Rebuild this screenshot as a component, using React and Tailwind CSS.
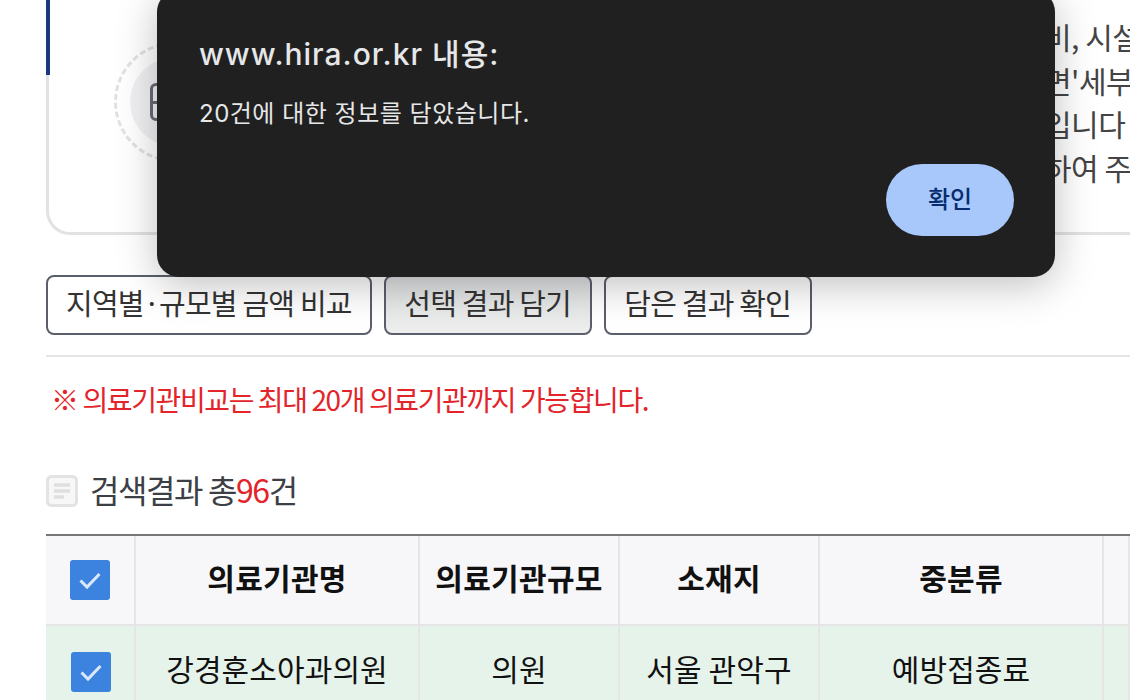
const FONT = "font-['Noto_Sans_CJK_KR','Noto_Sans',sans-serif]"

const COLUMNS = 'grid grid-cols-[90px_284px_200px_200px_284px_1fr]'
const HEADERS = ['의료기관명', '의료기관규모', '소재지', '중분류', '']
const ROW = ['강경훈소아과의원', '의원', '서울 관악구', '예방접종료', '']
const NOTICE = ['비, 시설', "면'세부", '입니다', '하여 주']

function CheckBox({ className = '' }) {
  return (
    <span className={`flex h-10 w-10 items-center justify-center rounded-[3px] bg-[#3b83de] ${className}`}>
      <svg width="24" height="24" viewBox="0 0 24 24" fill="none">
        <path d="M2.5 12.5 9 19 21.5 6" stroke="#dbe8fa" strokeWidth="3" />
      </svg>
    </span>
  )
}

function ActionButton({ active, children }) {
  return (
    <button
      className={`h-[60px] min-w-[208px] rounded-lg border-2 border-[#5b5f6b] px-[18px] text-[29px] tracking-[-0.8px] text-[#333] ${
        active ? 'bg-gradient-to-b from-[#dfe1e2] to-[#eeeeee]' : 'bg-white'
      }`}
    >
      <span className="relative top-[-2px]">{children}</span>
    </button>
  )
}

function AlertDialog() {
  return (
    <div className="absolute left-[157px] top-[-10px] flex h-[287px] w-[898px] flex-col rounded-[22px] bg-[#202020] pb-[41px] pl-[42px] pr-[41px] pt-[44px] shadow-[0_8px_40px_rgba(0,0,0,0.25)]">
      <h2 className="font-['Inter','Noto_Sans_CJK_KR',sans-serif] text-[30px] font-medium leading-[40px] tracking-[1px] text-[#e6e7e8]">
        www.hira.or.kr 내용:
      </h2>
      <p className="mt-[23px] font-['Inter','Noto_Sans_CJK_KR',sans-serif] text-[24px] leading-[34px] tracking-[0.5px] text-[#e6e7e8]">
        20건에 대한 정보를 담았습니다.
      </p>
      <button className="ml-auto mt-auto h-[72px] w-[128px] rounded-full bg-[#a8c7fa] text-[24px] font-medium text-[#062e6f]">
        <span className="relative top-[-2px]">확인</span>
      </button>
    </div>
  )
}

export default function App() {
  return (
    <div className={`relative h-[700px] w-[1130px] overflow-hidden bg-white ${FONT}`}>
      <div className="pl-[46px]">
        {/* 안내 박스 */}
        <div className="relative flex h-[235px] w-[1160px] rounded-b-[24px] border-x-[3px] border-b-[3px] border-[#e2e2e4]">
          <span className="absolute left-[-3px] top-0 h-[75px] w-1 bg-[#1a3a7e]" />
          <div className="ml-[65px] mt-[42px] flex h-[120px] w-[120px] items-center justify-center rounded-full border-[3px] border-dashed border-[#e2e2e4]">
            <div className="flex h-[88px] w-[88px] items-center justify-center rounded-full bg-[#f1f1f3]">
              <div className="flex h-[38px] w-[48px] items-center rounded-[6px] border-[3px] border-[#666a75]">
                <div className="h-[3px] w-full bg-[#666a75]" />
              </div>
            </div>
          </div>
          <div className="ml-[810px] mt-[15px] flex flex-col whitespace-nowrap text-[30px] leading-[43.5px] tracking-[-0.5px] text-[#444]">
            {NOTICE.map((line) => (
              <span key={line}>{line}</span>
            ))}
          </div>
        </div>

        <div className="mt-10 flex gap-3">
          <ActionButton>지역별·규모별 금액 비교</ActionButton>
          <ActionButton active>선택 결과 담기</ActionButton>
          <ActionButton>담은 결과 확인</ActionButton>
        </div>

        <div className="mt-5 h-0.5 bg-[#e5e5e5]" />

        <p className="ml-[5px] mt-[22px] text-[28px] leading-[40px] tracking-[-1.4px] text-[#e3242b]">
          ※ 의료기관비교는 최대 20개 의료기관까지 가능합니다.
        </p>

        <div className="mt-[50px] flex h-[44px] items-center">
          <svg width="32" height="32" viewBox="0 0 32 32" fill="none">
            <rect x="1.5" y="1.5" width="29" height="29" rx="4" fill="#f7f7f7" stroke="#e3e3e3" strokeWidth="3" />
            <path d="M8 10h16M8 16h16M8 22h10" stroke="#dfdfdf" strokeWidth="3.5" />
          </svg>
          <span className="relative top-[-2px] ml-[12px] text-[32px] tracking-[-1.4px] text-[#3c3f46]">
            검색결과 총<span className="text-[#e3242b]">96</span>건
          </span>
        </div>

        <div className="mt-[21px] border-t-2 border-[#777]">
          <div className={`${COLUMNS} h-[90px] border-b-2 border-[#e5e5e5] bg-[#f7f7fa]`}>
            <div className="flex items-center justify-center border-r-2 border-[#e5e5e5]">
              <CheckBox />
            </div>
            {HEADERS.map((label, i) => (
              <div key={i} className="flex items-center justify-center border-r-2 border-[#e5e5e5] pb-[5px] text-[30px] font-bold tracking-[0.3px] text-[#111]">
                {label}
              </div>
            ))}
          </div>
          <div className={`${COLUMNS} h-[90px] bg-[#e6f3ea]`}>
            <div className="flex items-center justify-center border-r-2 border-[#e5e5e5]">
              <CheckBox className="ml-[2px] mt-[2px]" />
            </div>
            {ROW.map((label, i) => (
              <div key={i} className="flex items-center justify-center border-r-2 border-[#e5e5e5] pb-[5px] text-[30px] tracking-[0.1px] text-[#111]">
                {label}
              </div>
            ))}
          </div>
        </div>
      </div>

      <AlertDialog />
    </div>
  )
}
